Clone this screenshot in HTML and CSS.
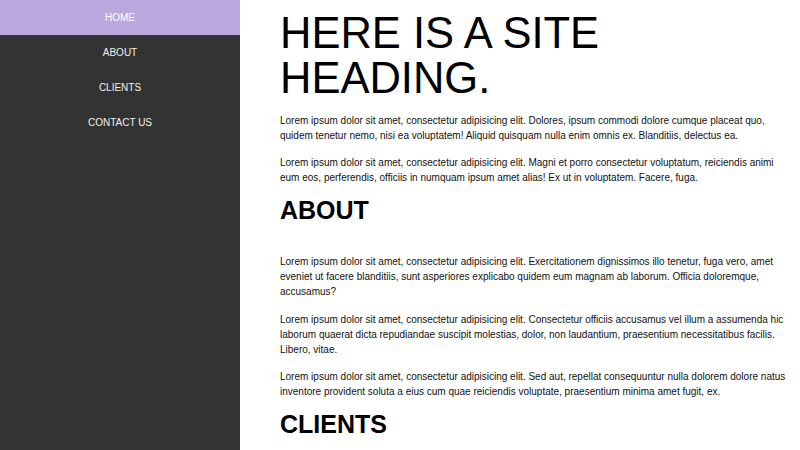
FILE: index.html
```html
<!DOCTYPE html>
<html lang="en">
<head>
<meta charset="utf-8">
<title>Site</title>
<link rel="stylesheet" href="styles.css">
</head>
<body>
<div class="page">
  <nav class="sidebar">
    <ul class="nav">
      <li class="nav-item active"><a href="#">HOME</a></li>
      <li class="nav-item"><a href="#">ABOUT</a></li>
      <li class="nav-item"><a href="#">CLIENTS</a></li>
      <li class="nav-item"><a href="#">CONTACT US</a></li>
    </ul>
  </nav>
  <main class="content">
    <h1 class="site-heading">HERE IS A SITE HEADING.</h1>
    <p>Lorem ipsum dolor sit amet, consectetur adipisicing elit. Dolores, ipsum commodi dolore cumque placeat quo, quidem tenetur nemo, nisi ea voluptatem! Aliquid quisquam nulla enim omnis ex. Blanditiis, delectus ea.</p>
    <p>Lorem ipsum dolor sit amet, consectetur adipisicing elit. Magni et porro consectetur voluptatum, reiciendis animi eum eos, perferendis, officiis in numquam ipsum amet alias! Ex ut in voluptatem. Facere, fuga.</p>
    <section class="section">
      <h2 class="section-title">ABOUT</h2>
      <p>Lorem ipsum dolor sit amet, consectetur adipisicing elit. Exercitationem dignissimos illo tenetur, fuga vero, amet eveniet ut facere blanditiis, sunt asperiores explicabo quidem eum magnam ab laborum. Officia doloremque, accusamus?</p>
      <p>Lorem ipsum dolor sit amet, consectetur adipisicing elit. Consectetur officiis accusamus vel illum a assumenda hic laborum quaerat dicta repudiandae suscipit molestias, dolor, non laudantium, praesentium necessitatibus facilis. Libero, vitae.</p>
      <p>Lorem ipsum dolor sit amet, consectetur adipisicing elit. Sed aut, repellat consequuntur nulla dolorem dolore natus inventore provident soluta a eius cum quae reiciendis voluptate, praesentium minima amet fugit, ex.</p>
    </section>
    <section class="section">
      <h2 class="section-title">CLIENTS</h2>
    </section>
  </main>
</div>
</body>
</html>
```
FILE: styles.css
```css
html, body {
  margin: 0;
  padding: 0;
  height: 100%;
  overflow: hidden;
}
body {
  font-family: "Liberation Sans", Arial, sans-serif;
  background: #ffffff;
  color: #111111;
}
.page {
  display: flex;
  height: 100vh;
}
.sidebar {
  flex: 0 0 240px;
  height: 100vh;
  background: #333333;
}
.nav {
  list-style: none;
  margin: 0;
  padding: 0;
}
.nav-item a {
  display: block;
  height: 35px;
  line-height: 35px;
  text-align: center;
  font-size: 10px;
  color: #f2f2f2;
  text-decoration: none;
}
.nav-item.active a {
  background: #b9a7dd;
  color: #ffffff;
}
.content {
  flex: 1;
  padding: 11px 10px 0 40px;
  min-width: 0;
}
.site-heading {
  margin: 0;
  font-size: 43.5px;
  line-height: 45px;
  font-weight: normal;
  color: #000000;
}
.content p {
  margin: 12px 0 0;
  font-size: 10px;
  line-height: 15px;
  color: #111111;
}
.section-title {
  margin: 11px 0 0;
  font-size: 25px;
  line-height: 29px;
  font-weight: bold;
  color: #000000;
}
.section .section-title + p {
  margin-top: 29px;
}
.section p {
  margin-top: 12.5px;
}
```
